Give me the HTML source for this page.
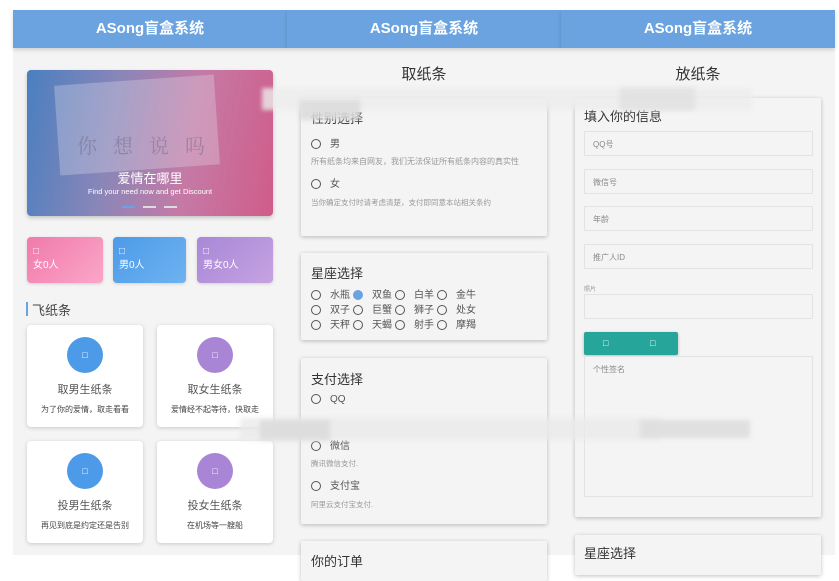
<!DOCTYPE html>
<html><head><meta charset="utf-8"><style>
*{box-sizing:border-box;margin:0;padding:0}
body{width:839px;height:561px;overflow:hidden;background:#fff;font-family:"Liberation Sans","Noto Sans CJK SC",sans-serif;position:relative;color:#333}
.abs{position:absolute}
.hdr{position:absolute;top:10px;height:38px;background:#6aa3e0;color:#fff;font-weight:bold;font-size:15px;text-align:center;line-height:38px;box-shadow:0 2px 4px rgba(0,0,0,.15)}
.pan{position:absolute;top:48px;height:507px;background:#f4f4f4}
.card{position:absolute;background:#f4f4f4;box-shadow:0 1px 4px rgba(0,0,0,.25);border-radius:2px}
.wcard{position:absolute;background:#fff;box-shadow:0 1px 4px rgba(0,0,0,.18);border-radius:4px;text-align:center}
.circ{width:36px;height:36px;border-radius:50%;margin:12px auto 0;color:#fff;font-size:9px;line-height:36px}
.t1{font-size:11px;color:#555;margin-top:8px}
.t2{font-size:8px;color:#444;margin-top:7px}
.stat{position:absolute;top:237px;height:46px;border-radius:4px;color:#fff;font-size:10px;padding:8px 6px;line-height:14px;box-shadow:0 1px 3px rgba(0,0,0,.15)}
.rad{display:inline-block;width:10px;height:10px;border:1.5px solid #555;border-radius:50%;vertical-align:middle;margin-right:9px}
.rad.on{background:#6aa3e0;border-color:#6aa3e0}
.h{font-size:13px;color:#333}
.s{font-size:7.5px;color:#999}
.r{font-size:10px;color:#555}
.inp{position:absolute;left:584px;width:229px;height:25px;border:1px solid #e3e3e3;background:#f4f4f4;font-size:8px;color:#888;padding:7px 8px}
.blur{position:absolute;background:rgba(225,225,225,.9);filter:blur(2px)}
.z td{font-size:10px;color:#555;padding:0 3px 0 0;height:13px}
</style></head><body>
<div class="pan" style="left:13px;width:274px"></div>
<div class="pan" style="left:287px;width:274px"></div>
<div class="pan" style="left:561px;width:274px"></div>
<div class="hdr" style="left:13px;width:274px">ASong盲盒系统</div>
<div class="hdr" style="left:287px;width:274px">ASong盲盒系统</div>
<div class="hdr" style="left:561px;width:274px">ASong盲盒系统</div>

<!-- panel 1 -->
<div class="abs" style="left:27px;top:70px;width:246px;height:146px;border-radius:4px;background:linear-gradient(100deg,#4a7fc0 0%,#8a86b8 35%,#c57aa6 65%,#d05c8a 100%);box-shadow:0 2px 4px rgba(0,0,0,.2);overflow:hidden">
 <div class="abs" style="left:30px;top:10px;width:160px;height:90px;background:rgba(230,230,240,.3);transform:rotate(-4deg)"></div>
 <div class="abs" style="left:50px;top:60px;font-family:'Noto Serif CJK SC',serif;font-size:20px;color:rgba(120,110,140,.55);letter-spacing:16px">你想说吗</div>
 <div class="abs" style="left:0;width:246px;top:98px;text-align:center;color:#fff;font-size:13px">爱情在哪里</div>
 <div class="abs" style="left:0;width:246px;top:117px;text-align:center;color:#fff;font-size:7.5px">Find your need now and get Discount</div>
 <div class="abs" style="left:95px;top:136px;width:13px;height:2px;background:#6aa3e0"></div>
 <div class="abs" style="left:116px;top:136px;width:13px;height:2px;background:#ddd"></div>
 <div class="abs" style="left:137px;top:136px;width:13px;height:2px;background:#ddd"></div>
</div>
<div class="stat" style="left:27px;width:76px;background:linear-gradient(135deg,#f07aaa,#fba6c8)">□<br>女0人</div>
<div class="stat" style="left:113px;width:73px;background:linear-gradient(135deg,#4d9ae8,#6eb3f0)">□<br>男0人</div>
<div class="stat" style="left:197px;width:76px;background:linear-gradient(135deg,#a888d8,#c6a2e0)">□<br>男女0人</div>
<div class="abs" style="left:26px;top:302px;width:2px;height:14px;background:#6aa3e0"></div>
<div class="abs" style="left:32px;top:300px;font-size:13px;color:#444">飞纸条</div>
<div class="wcard" style="left:27px;top:325px;width:116px;height:102px"><div class="circ" style="background:#4d9ae8">□</div><div class="t1">取男生纸条</div><div class="t2">为了你的爱情，取走看看</div></div>
<div class="wcard" style="left:157px;top:325px;width:116px;height:102px"><div class="circ" style="background:#a985d6">□</div><div class="t1">取女生纸条</div><div class="t2">爱情经不起等待，快取走</div></div>
<div class="wcard" style="left:27px;top:441px;width:116px;height:102px"><div class="circ" style="background:#4d9ae8">□</div><div class="t1">投男生纸条</div><div class="t2">再见到底是约定还是告别</div></div>
<div class="wcard" style="left:157px;top:441px;width:116px;height:102px"><div class="circ" style="background:#a985d6">□</div><div class="t1">投女生纸条</div><div class="t2">在机场等一艘船</div></div>

<!-- panel 2 -->
<div class="abs" style="left:287px;width:274px;top:63px;text-align:center;font-size:15px;color:#333">取纸条</div>
<div class="card" style="left:301px;top:98px;width:246px;height:138px;padding:12px 10px">
 <div class="h" style="margin-top:-2px">性别选择</div>
 <div class="r" style="margin-top:8px"><span class="rad"></span>男</div>
 <div class="s" style="margin-top:6px;line-height:11px;font-size:8px">所有纸条均来自网友，我们无法保证所有纸条内容的真实性</div>
 <div class="r" style="margin-top:8px"><span class="rad"></span>女</div>
 <div class="s" style="margin-top:7px">当你确定支付时请考虑清楚，支付即同意本站相关条约</div>
</div>
<div class="card" style="left:301px;top:253px;width:246px;height:87px;padding:10px 10px">
 <div class="h">星座选择</div>
 <table class="z" style="border-collapse:collapse;margin-top:4px"><tr><td><span class="rad"></span>水瓶</td><td><span class="rad on"></span>双鱼</td><td><span class="rad"></span>白羊</td><td><span class="rad"></span>金牛</td></tr>
 <tr><td><span class="rad"></span>双子</td><td><span class="rad"></span>巨蟹</td><td><span class="rad"></span>狮子</td><td><span class="rad"></span>处女</td></tr>
 <tr><td><span class="rad"></span>天秤</td><td><span class="rad"></span>天蝎</td><td><span class="rad"></span>射手</td><td><span class="rad"></span>摩羯</td></tr></table>
</div>
<div class="card" style="left:301px;top:358px;width:246px;height:166px;padding:11px 10px">
 <div class="h">支付选择</div>
 <div class="r" style="margin-top:6px"><span class="rad"></span>QQ</div>
 <div class="r" style="margin-top:32px"><span class="rad"></span>微信</div>
 <div class="s" style="margin-top:6px">腾讯微信支付.</div>
 <div class="r" style="margin-top:8px"><span class="rad"></span>支付宝</div>
 <div class="s" style="margin-top:7px">阿里云支付宝支付.</div>
</div>
<div class="card" style="left:301px;top:541px;width:246px;height:40px;padding:10px"><div class="h">你的订单</div></div>

<!-- panel 3 -->
<div class="abs" style="left:561px;width:274px;top:63px;text-align:center;font-size:15px;color:#333">放纸条</div>
<div class="card" style="left:575px;top:98px;width:246px;height:419px"></div>
<div class="abs h" style="left:584px;top:106px">填入你的信息</div>
<div class="inp" style="top:131px">QQ号</div>
<div class="inp" style="top:169px">微信号</div>
<div class="inp" style="top:206px">年龄</div>
<div class="inp" style="top:244px">推广人ID</div>
<div class="abs" style="left:584px;top:284px;font-size:6px;color:#999">照片</div>
<div class="inp" style="top:294px"></div>
<div class="abs" style="left:584px;top:332px;width:94px;height:23px;background:#26a69a;border-radius:2px;box-shadow:0 1px 3px rgba(0,0,0,.25);color:#fff;font-size:9px;line-height:23px"><span style="position:absolute;left:19px">□</span><span style="position:absolute;left:66px">□</span></div>
<div class="inp" style="top:356px;height:141px">个性签名</div>
<div class="card" style="left:575px;top:535px;width:246px;height:40px;padding:8px 9px"><div class="h">星座选择</div></div>

<!-- blur artifacts -->
<div class="blur" style="left:262px;top:88px;width:490px;height:22px;background:rgba(236,236,236,.8)"></div>
<div class="blur" style="left:300px;top:100px;width:60px;height:20px;background:rgba(220,220,220,.9)"></div>
<div class="blur" style="left:620px;top:88px;width:75px;height:22px;background:rgba(225,225,225,.9)"></div>
<div class="blur" style="left:240px;top:418px;width:420px;height:22px;background:rgba(234,234,234,.8)"></div>
<div class="blur" style="left:640px;top:420px;width:110px;height:18px;background:rgba(222,222,222,.9)"></div>
<div class="blur" style="left:260px;top:420px;width:70px;height:20px;background:rgba(220,220,220,.9)"></div>
</body></html>
